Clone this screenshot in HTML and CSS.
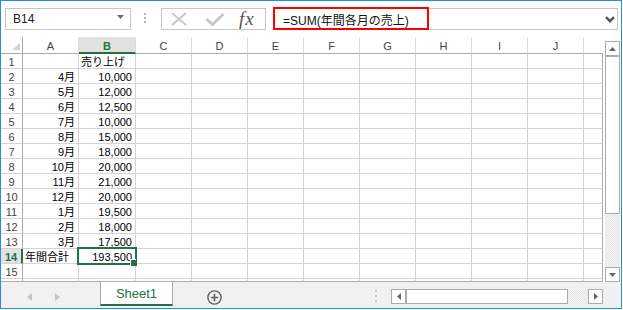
FILE: index.html
```html
<!DOCTYPE html>
<html lang="ja">
<head>
    <meta charset="UTF-8">
    <title>Sheet1</title>
    <link rel="stylesheet" href="styles.css">
</head>
<body>
    <div class="window">
        <!-- Name box + formula bar -->
        <div class="formula-bar">
            <div class="name-box">
                <span>B14</span>
                <svg class="name-arrow" width="7" height="4" viewBox="0 0 7 4"><path d="M0 0H7L3.5 4Z" fill="#6d6d6d"/></svg>
            </div>
            <div class="grip"></div>
            <div class="fx-box">
                <svg width="16" height="14" viewBox="0 0 16 14"><path d="M1 1L15 13M15 1L1 13" stroke="#c8c8c8" stroke-width="2" fill="none"/></svg>
                <svg class="check" width="20" height="13" viewBox="0 0 20 13"><path d="M1.5 6L7.5 11.5L18.5 1" stroke="#c8c8c8" stroke-width="3" fill="none"/></svg>
                <span class="fx">fx</span>
            </div>
            <div class="formula">
                <span class="formula-mark"></span>
                <span class="formula-text">=SUM(年間各月の売上)</span>
                <svg class="formula-open" width="10" height="7" viewBox="0 0 10 7"><path d="M1 1.2L5 5.2L9 1.2" stroke="#555" stroke-width="2.4" fill="none"/></svg>
            </div>
        </div>

        <!-- Sheet grid -->
        <div class="sheet-area">
            <div class="grid" id="grid"></div>
            <div class="vscroll">
                <div class="sb-btn"><svg width="7" height="4" viewBox="0 0 7 4"><path d="M3.5 0L7 4H0Z" fill="#666"/></svg></div>
                <div class="sb-thumb vthumb"></div>
                <div class="sb-track"></div>
                <div class="sb-btn"><svg width="7" height="4" viewBox="0 0 7 4"><path d="M0 0H7L3.5 4Z" fill="#666"/></svg></div>
            </div>
        </div>

        <!-- Sheet tabs -->
        <div class="tab-bar">
            <div class="sheet-nav">
                <svg width="5" height="8" viewBox="0 0 5 8"><path d="M5 0V8L0 4Z" fill="#c4c4c4"/></svg>
                <svg width="5" height="8" viewBox="0 0 5 8"><path d="M0 0V8L5 4Z" fill="#c4c4c4"/></svg>
            </div>
            <div class="sheet-tab">Sheet1</div>
            <svg class="add-sheet" width="15" height="15" viewBox="0 0 15 15">
                <circle cx="7.5" cy="7.5" r="6.6" stroke="#5f5f5f" stroke-width="1.4" fill="none"/>
                <path d="M7.5 3.8V11.2M3.8 7.5H11.2" stroke="#5f5f5f" stroke-width="1.6"/>
            </svg>
            <div class="tab-grip"></div>
            <div class="hscroll">
                <div class="sb-btn"><svg width="4" height="7" viewBox="0 0 4 7"><path d="M4 0V7L0 3.5Z" fill="#666"/></svg></div>
                <div class="sb-thumb hthumb"></div>
                <div class="sb-track"></div>
                <div class="sb-btn"><svg width="4" height="7" viewBox="0 0 4 7"><path d="M0 0V7L4 3.5Z" fill="#666"/></svg></div>
            </div>
        </div>
    </div>

    <script src="script.js"></script>
</body>
</html>
```

FILE: styles.css
```css
* {
    box-sizing: border-box;
    margin: 0;
    padding: 0;
}

body {
    background-color: #fff;
    font-family: "Liberation Sans", "Noto Sans CJK JP", sans-serif;
}

.window {
    width: 622px;
    height: 309px;
    border: 1px solid #1e8fef;
    display: flex;
    flex-direction: column;
    background-color: #fff;
}

/* Formula bar */
.formula-bar {
    height: 36px;
    display: flex;
    align-items: flex-start;
    padding: 7px 0 0 4px;
    flex-shrink: 0;
}

.name-box {
    width: 126px;
    height: 22px;
    border: 1px solid #c6c6c6;
    display: flex;
    align-items: center;
    justify-content: space-between;
    padding: 0 6px 0 7px;
    font-size: 12px;
    color: #222;
}

.name-arrow {
    margin-bottom: 4px;
}

.grip {
    width: 2px;
    height: 10px;
    margin: 5px 0 0 13px;
    background-image: linear-gradient(#b4b4b4 50%, transparent 50%);
    background-size: 2px 4px;
}

.fx-box {
    width: 105px;
    height: 22px;
    margin-left: 15px;
    border: 1px solid #c6c6c6;
    display: flex;
    align-items: center;
    padding-left: 9px;
}

.check {
    margin-left: 18px;
}

.fx {
    margin-left: 14px;
    font-family: "Liberation Serif", serif;
    font-style: italic;
    font-size: 19px;
    letter-spacing: 1px;
    line-height: 20px;
    color: #555;
}

.formula {
    flex: 1;
    height: 22px;
    margin: 0 3px 0 7px;
    border: 1px solid #c6c6c6;
    position: relative;
    display: flex;
    align-items: center;
    padding-left: 9px;
    font-size: 12px;
    color: #111;
}

.formula-mark {
    position: absolute;
    left: -1px;
    top: -2px;
    width: 156px;
    height: 23px;
    border: 2px solid #f00;
}

.formula-open {
    margin-left: auto;
    margin-right: 2px;
}

/* Grid */
.sheet-area {
    height: 245px;
    display: flex;
    flex-shrink: 0;
}

.grid {
    width: 602px;
    display: grid;
    grid-template-columns: 22px 56px 57px repeat(8, 56px) 19px;
    grid-template-rows: 17px repeat(15, 15px) 3px;
}

.corner {
    border-right: 1px solid #ababab;
    border-bottom: 1px solid #ababab;
    display: flex;
    justify-content: flex-end;
    align-items: flex-end;
    padding: 0 2px 3px 0;
}

.corner::after {
    content: "";
    width: 8px;
    height: 7px;
    background-color: #d0d0d0;
    clip-path: polygon(100% 0, 100% 100%, 0 100%);
}

.col-head {
    border-right: 1px solid #dcdcdc;
    border-bottom: 1px solid #ababab;
    text-align: center;
    font-size: 11px;
    line-height: 13px;
    padding-top: 3px;
    color: #444;
}

.col-head.cut {
    border-right: none;
}

.col-head.active {
    background-color: #e1e1e1;
    color: #217346;
    font-weight: bold;
    border-bottom: 2px solid #217346;
}

.row-head {
    border-right: 1px solid #ababab;
    border-bottom: 1px solid #d4d4d4;
    text-align: center;
    font-size: 11px;
    line-height: 12px;
    padding-top: 2px;
    color: #444;
}

.row-head.active {
    background-color: #e1e1e1;
    color: #217346;
    font-weight: bold;
    border-right: 2px solid #217346;
}

.cell {
    border-right: 1px solid #d4d4d4;
    border-bottom: 1px solid #d4d4d4;
    font-size: 11px;
    line-height: 12px;
    padding: 2px 3px 0 2px;
    white-space: nowrap;
    color: #000;
}

.cell.num {
    text-align: right;
}

.cell.edge {
    border-right-color: #ababab;
}

.row-head.cut-row,
.cell.cut-row {
    border-bottom-color: #ababab;
    padding: 0;
}

.cell.current {
    position: relative;
}

.selection {
    position: absolute;
    left: -2px;
    top: -2px;
    right: -2px;
    bottom: -2px;
    border: 2px solid #217346;
}

.fill-handle {
    position: absolute;
    right: -2px;
    bottom: -3px;
    width: 6px;
    height: 6px;
    background-color: #217346;
    box-shadow: -1px -1px 0 #fff;
}

/* Scrollbars */
.vscroll {
    width: 15px;
    height: 241px;
    margin: 4px 0 0 2px;
    display: flex;
    flex-direction: column;
}

.sb-btn {
    width: 15px;
    height: 15px;
    flex-shrink: 0;
    border: 1px solid #ababab;
    background-color: #fff;
    display: flex;
    align-items: center;
    justify-content: center;
}

.sb-thumb {
    border: 1px solid #ababab;
    background-color: #fff;
    flex-shrink: 0;
}

.vthumb {
    height: 158px;
}

.hthumb {
    width: 162px;
}

.sb-track {
    flex: 1;
    background: repeating-conic-gradient(#e4e4e4 0 25%, #f6f6f6 0 50%) 0 0 / 2px 2px;
}

/* Sheet tabs */
.tab-bar {
    height: 26px;
    display: flex;
    align-items: flex-start;
    background-color: #f1f1f1;
}

.sheet-nav {
    width: 99px;
    display: flex;
    gap: 23px;
    padding: 11px 0 0 26px;
}

.sheet-tab {
    width: 73px;
    height: 24px;
    background-color: #fff;
    border-left: 1px solid #ababab;
    border-right: 1px solid #ababab;
    border-bottom: 2px solid #217346;
    text-align: center;
    font-size: 13px;
    line-height: 22px;
    padding-top: 1px;
    color: #217346;
}

.add-sheet {
    margin: 8px 0 0 34px;
}

.tab-grip {
    width: 2px;
    height: 12px;
    margin: 8px 0 0 auto;
    background-image: linear-gradient(#c0c0c0 40%, transparent 40%);
    background-size: 2px 5px;
}

.hscroll {
    width: 212px;
    height: 15px;
    margin: 7px 18px 0 14px;
    display: flex;
}
```

FILE: script.js
```js
const columns = ["A", "B", "C", "D", "E", "F", "G", "H", "I", "J", ""];
const values = [
    ["", "売り上げ"],
    ["4月", "10,000"],
    ["5月", "12,000"],
    ["6月", "12,500"],
    ["7月", "10,000"],
    ["8月", "15,000"],
    ["9月", "18,000"],
    ["10月", "20,000"],
    ["11月", "21,000"],
    ["12月", "20,000"],
    ["1月", "19,500"],
    ["2月", "18,000"],
    ["3月", "17,500"],
    ["年間合計", "193,500"],
    ["", ""]
];

const grid = document.getElementById("grid");

function addCell(cls, text) {
    const div = document.createElement("div");
    div.className = cls;
    if (text) div.textContent = text;
    grid.appendChild(div);
    return div;
}

// header row
addCell("corner");
columns.forEach(c => {
    let cls = "col-head";
    if (c === "B") cls += " active";
    if (c === "") cls += " cut";
    addCell(cls, c);
});

// data rows
values.forEach((row, r) => {
    const n = r + 1;
    addCell("row-head" + (n === 14 ? " active" : ""), String(n));
    columns.forEach((c, i) => {
        const text = i < 2 ? row[i] : "";
        let cls = "cell";
        if (/^[\d,]+$/.test(text) || /月$/.test(text)) cls += " num";
        if (c === "") cls += " edge";
        const cell = addCell(cls, text);

        // active cell B14
        if (n === 14 && c === "B") {
            cell.classList.add("current");
            const sel = document.createElement("div");
            sel.className = "selection";
            sel.innerHTML = '<span class="fill-handle"></span>';
            cell.appendChild(sel);
        }
    });
});

// row 16, cut off by the tab bar
addCell("row-head cut-row");
columns.forEach(c => addCell("cell cut-row" + (c === "" ? " edge" : "")));
```
